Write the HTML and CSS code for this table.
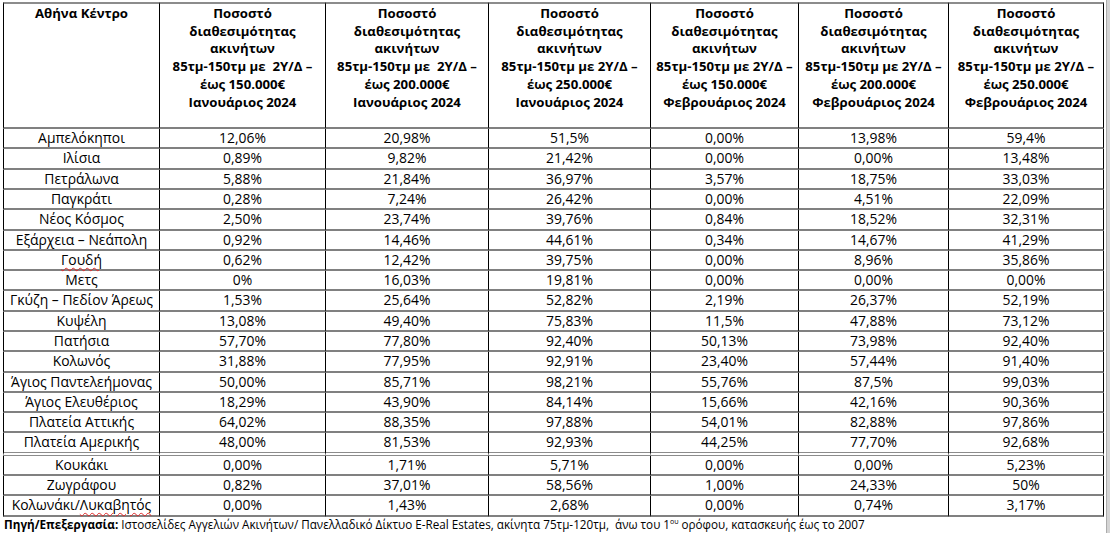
FILE: index.html
```html
<!DOCTYPE html>
<html lang="el">
<head>
<meta charset="utf-8">
<title>Αθήνα Κέντρο</title>
<link rel="stylesheet" href="styles.css">
</head>
<body>
<div class="page">
  <div class="doc">
    <table class="grid">
      <colgroup>
        <col class="c1"><col class="c2"><col class="c3"><col class="c4"><col class="c5"><col class="c6"><col class="c7">
      </colgroup>
      <thead>
        <tr>
          <th>Αθήνα Κέντρο</th>
          <th>Ποσοστό<br>διαθεσιμότητας<br>ακινήτων<br>85τμ-150τμ με&nbsp; 2Υ/Δ –<br>έως 150.000€<br>Ιανουάριος 2024</th>
          <th>Ποσοστό<br>διαθεσιμότητας<br>ακινήτων<br>85τμ-150τμ με&nbsp; 2Υ/Δ –<br>έως 200.000€<br>Ιανουάριος 2024</th>
          <th>Ποσοστό<br>διαθεσιμότητας<br>ακινήτων<br>85τμ-150τμ με 2Υ/Δ –<br>έως 250.000€<br>Ιανουάριος 2024</th>
          <th>Ποσοστό<br>διαθεσιμότητας<br>ακινήτων<br>85τμ-150τμ με 2Υ/Δ –<br>έως 150.000€<br>Φεβρουάριος 2024</th>
          <th>Ποσοστό<br>διαθεσιμότητας<br>ακινήτων<br>85τμ-150τμ με 2Υ/Δ –<br>έως 200.000€<br>Φεβρουάριος 2024</th>
          <th>Ποσοστό<br>διαθεσιμότητας<br>ακινήτων<br>85τμ-150τμ με 2Υ/Δ –<br>έως 250.000€<br>Φεβρουάριος 2024</th>
        </tr>
      </thead>
      <tbody>
        <tr><td>Αμπελόκηποι</td><td>12,06%</td><td>20,98%</td><td>51,5%</td><td>0,00%</td><td>13,98%</td><td>59,4%</td></tr>
        <tr><td>Ιλίσια</td><td>0,89%</td><td>9,82%</td><td>21,42%</td><td>0,00%</td><td>0,00%</td><td>13,48%</td></tr>
        <tr><td>Πετράλωνα</td><td>5,88%</td><td>21,84%</td><td>36,97%</td><td>3,57%</td><td>18,75%</td><td>33,03%</td></tr>
        <tr><td>Παγκράτι</td><td>0,28%</td><td>7,24%</td><td>26,42%</td><td>0,00%</td><td>4,51%</td><td>22,09%</td></tr>
        <tr><td>Νέος Κόσμος</td><td>2,50%</td><td>23,74%</td><td>39,76%</td><td>0,84%</td><td>18,52%</td><td>32,31%</td></tr>
        <tr><td>Εξάρχεια – Νεάπολη</td><td>0,92%</td><td>14,46%</td><td>44,61%</td><td>0,34%</td><td>14,67%</td><td>41,29%</td></tr>
        <tr><td><span class="sp">Γουδή</span></td><td>0,62%</td><td>12,42%</td><td>39,75%</td><td>0,00%</td><td>8,96%</td><td>35,86%</td></tr>
        <tr><td>Μετς</td><td>0%</td><td>16,03%</td><td>19,81%</td><td>0,00%</td><td>0,00%</td><td>0,00%</td></tr>
        <tr><td>Γκύζη – Πεδίον Άρεως</td><td>1,53%</td><td>25,64%</td><td>52,82%</td><td>2,19%</td><td>26,37%</td><td>52,19%</td></tr>
        <tr><td>Κυψέλη</td><td>13,08%</td><td>49,40%</td><td>75,83%</td><td>11,5%</td><td>47,88%</td><td>73,12%</td></tr>
        <tr><td>Πατήσια</td><td>57,70%</td><td>77,80%</td><td>92,40%</td><td>50,13%</td><td>73,98%</td><td>92,40%</td></tr>
        <tr><td>Κολωνός</td><td>31,88%</td><td>77,95%</td><td>92,91%</td><td>23,40%</td><td>57,44%</td><td>91,40%</td></tr>
        <tr><td>Άγιος Παντελεήμονας</td><td>50,00%</td><td>85,71%</td><td>98,21%</td><td>55,76%</td><td>87,5%</td><td>99,03%</td></tr>
        <tr><td>Άγιος Ελευθέριος</td><td>18,29%</td><td>43,90%</td><td>84,14%</td><td>15,66%</td><td>42,16%</td><td>90,36%</td></tr>
        <tr><td>Πλατεία Αττικής</td><td>64,02%</td><td>88,35%</td><td>97,88%</td><td>54,01%</td><td>82,88%</td><td>97,86%</td></tr>
        <tr class="group-end"><td>Πλατεία Αμερικής</td><td>48,00%</td><td>81,53%</td><td>92,93%</td><td>44,25%</td><td>77,70%</td><td>92,68%</td></tr>
        <tr><td>Κουκάκι</td><td>0,00%</td><td>1,71%</td><td>5,71%</td><td>0,00%</td><td>0,00%</td><td>5,23%</td></tr>
        <tr><td>Ζωγράφου</td><td>0,82%</td><td>37,01%</td><td>58,56%</td><td>1,00%</td><td>24,33%</td><td>50%</td></tr>
        <tr><td>Κολωνάκι/<span class="sp">Λυκαβητός</span></td><td>0,00%</td><td>1,43%</td><td>2,68%</td><td>0,00%</td><td>0,74%</td><td>3,17%</td></tr>
      </tbody>
    </table>
    <p class="source"><b>Πηγή/Επεξεργασία:</b> Ιστοσελίδες Αγγελιών Ακινήτων/ Πανελλαδικό Δίκτυο E-Real Estates, ακίνητα 75τμ-120τμ,&nbsp; άνω του 1<sup>ου</sup> ορόφου, κατασκευής έως το 2007</p>
  </div>
  <div class="edge"></div>
</div>
</body>
</html>
```
FILE: styles.css
```css
html, body {
  margin: 0;
  padding: 0;
  background: #fff;
}

body {
  font-family: "Open Sans", "DejaVu Sans", sans-serif;
  color: #000;
}

.page {
  display: flex;
  height: 533px;
  overflow: hidden;
}

.doc {
  flex: 1;
  padding: 2px 0 0 3px;
}

.edge {
  width: 3px;
  background: #d4d4d4;
  border-left: 1px solid #ababab;
}

.grid {
  border-collapse: separate;
  border-spacing: 0;
  table-layout: fixed;
  width: 1101px;
}

.c1 { width: 157px; }
.c2 { width: 166px; }
.c3 { width: 163px; }
.c4 { width: 162px; }
.c5 { width: 148px; }
.c6 { width: 150px; }
.c7 { width: 155px; }

.grid th,
.grid td {
  padding: 0;
  text-align: center;
  border-right: 1px solid #000;
  border-bottom: 2px solid #808080;
  white-space: nowrap;
}

.grid th:first-child,
.grid td:first-child {
  border-left: 1px solid #000;
}

.grid th {
  font-size: 13.2px;
  font-weight: 700;
  line-height: 17.7px;
  vertical-align: top;
  border-top: 2px solid #8c8c8c;
  padding: 1px 0 15.8px;
}

.grid td {
  font-size: 13.9px;
  font-weight: 400;
  line-height: 18.3px;
  height: 18.3px;
}

.grid .group-end td {
  border-bottom: 4px double #8c8c8c;
}

.sp {
  text-decoration: underline wavy #e02828;
  text-decoration-thickness: 1px;
  text-underline-offset: 2px;
}

.source {
  margin: 0;
  padding-left: 1px;
  font-size: 11.7px;
  line-height: 14px;
  white-space: nowrap;
}

.source sup {
  font-size: 7px;
  line-height: 0;
  vertical-align: 5px;
}
```
